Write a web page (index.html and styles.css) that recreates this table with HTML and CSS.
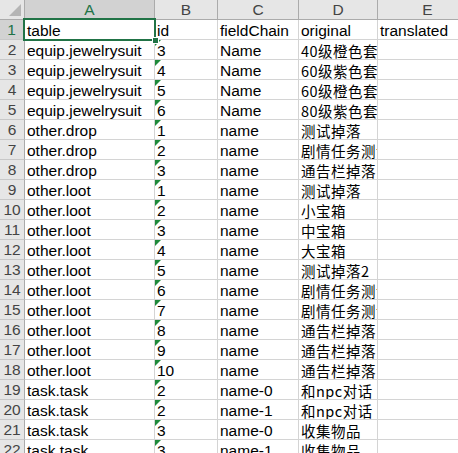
FILE: index.html
```html
<!DOCTYPE html>
<html lang="zh-CN">
<head>
<meta charset="utf-8">
<link rel="stylesheet" href="styles.css">
</head>
<body>
<div class="sheet">
  <div class="grid">
    <div class="hd corner"><span class="tri"></span></div>
    <div class="hd col sel">A</div>
    <div class="hd col">B</div>
    <div class="hd col">C</div>
    <div class="hd col">D</div>
    <div class="hd col">E</div>

    <div class="rh sel">1</div><div class="c a1">table</div><div class="c">id</div><div class="c">fieldChain</div><div class="c">original</div><div class="c">translated</div>
    <div class="rh">2</div><div class="c">equip.jewelrysuit</div><div class="c n">3</div><div class="c">Name</div><div class="c cjk">40级橙色套装</div><div class="c"></div>
    <div class="rh">3</div><div class="c">equip.jewelrysuit</div><div class="c n">4</div><div class="c">Name</div><div class="c cjk">60级紫色套装</div><div class="c"></div>
    <div class="rh">4</div><div class="c">equip.jewelrysuit</div><div class="c n">5</div><div class="c">Name</div><div class="c cjk">60级橙色套装</div><div class="c"></div>
    <div class="rh">5</div><div class="c">equip.jewelrysuit</div><div class="c n">6</div><div class="c">Name</div><div class="c cjk">80级紫色套装</div><div class="c"></div>
    <div class="rh">6</div><div class="c">other.drop</div><div class="c n">1</div><div class="c">name</div><div class="c cjk">测试掉落</div><div class="c"></div>
    <div class="rh">7</div><div class="c">other.drop</div><div class="c n">2</div><div class="c">name</div><div class="c cjk">剧情任务测试</div><div class="c"></div>
    <div class="rh">8</div><div class="c">other.drop</div><div class="c n">3</div><div class="c">name</div><div class="c cjk">通告栏掉落</div><div class="c"></div>
    <div class="rh">9</div><div class="c">other.loot</div><div class="c n">1</div><div class="c">name</div><div class="c cjk">测试掉落</div><div class="c"></div>
    <div class="rh">10</div><div class="c">other.loot</div><div class="c n">2</div><div class="c">name</div><div class="c cjk">小宝箱</div><div class="c"></div>
    <div class="rh">11</div><div class="c">other.loot</div><div class="c n">3</div><div class="c">name</div><div class="c cjk">中宝箱</div><div class="c"></div>
    <div class="rh">12</div><div class="c">other.loot</div><div class="c n">4</div><div class="c">name</div><div class="c cjk">大宝箱</div><div class="c"></div>
    <div class="rh">13</div><div class="c">other.loot</div><div class="c n">5</div><div class="c">name</div><div class="c cjk">测试掉落2</div><div class="c"></div>
    <div class="rh">14</div><div class="c">other.loot</div><div class="c n">6</div><div class="c">name</div><div class="c cjk">剧情任务测试</div><div class="c"></div>
    <div class="rh">15</div><div class="c">other.loot</div><div class="c n">7</div><div class="c">name</div><div class="c cjk">剧情任务测试</div><div class="c"></div>
    <div class="rh">16</div><div class="c">other.loot</div><div class="c n">8</div><div class="c">name</div><div class="c cjk">通告栏掉落</div><div class="c"></div>
    <div class="rh">17</div><div class="c">other.loot</div><div class="c n">9</div><div class="c">name</div><div class="c cjk">通告栏掉落</div><div class="c"></div>
    <div class="rh">18</div><div class="c">other.loot</div><div class="c n">10</div><div class="c">name</div><div class="c cjk">通告栏掉落</div><div class="c"></div>
    <div class="rh">19</div><div class="c">task.task</div><div class="c n">2</div><div class="c">name-0</div><div class="c cjk">和npc对话</div><div class="c"></div>
    <div class="rh">20</div><div class="c">task.task</div><div class="c n">2</div><div class="c">name-1</div><div class="c cjk">和npc对话</div><div class="c"></div>
    <div class="rh">21</div><div class="c">task.task</div><div class="c n">3</div><div class="c">name-0</div><div class="c cjk">收集物品</div><div class="c"></div>
    <div class="rh">22</div><div class="c">task.task</div><div class="c n">3</div><div class="c">name-1</div><div class="c cjk">收集物品</div><div class="c"></div>
  </div>
</div>
</body>
</html>
```

FILE: styles.css
```css
html, body {
  margin: 0;
  padding: 0;
  background: #ffffff;
}
.sheet {
  width: 458px;
  height: 453px;
  overflow: hidden;
}
.grid {
  display: grid;
  grid-template-columns: 25px 130px 63px 81px 79px 100px;
  grid-auto-rows: 20px;
  font-family: "Liberation Sans", Arial, sans-serif;
  font-size: 15.5px;
  color: #000;
}
.hd {
  background: #e6e6e6;
  border-right: 1px solid #ababab;
  border-bottom: 1px solid #ababab;
  box-sizing: border-box;
  color: #444;
  text-align: center;
  line-height: 20px;
  position: relative;
}
.tri {
  position: absolute;
  right: 3px;
  bottom: 3px;
  width: 0;
  height: 0;
  border-left: 12px solid transparent;
  border-bottom: 12px solid #b5b5b5;
}
.hd.sel {
  background: #d2d2d2;
  color: #217346;
  border-bottom: 2px solid #217346;
}
.rh {
  background: #e6e6e6;
  border-right: 1px solid #ababab;
  border-bottom: 1px solid #c8c8c8;
  box-sizing: border-box;
  color: #444;
  text-align: center;
  line-height: 20px;
}
.rh.sel {
  background: #d2d2d2;
  color: #217346;
  border-right: 2px solid #217346;
}
.c {
  border-right: 1px solid #d4d4d4;
  border-bottom: 1px solid #d4d4d4;
  box-sizing: border-box;
  padding: 1px 0 0 2px;
  line-height: 19px;
  white-space: nowrap;
  overflow: hidden;
  position: relative;
}
.cjk {
  font-family: "Noto Sans CJK JP", "Noto Sans CJK SC", sans-serif;
  font-size: 14.5px;
  letter-spacing: 0.5px;
  color: #000;
}
.n::before {
  content: "";
  position: absolute;
  left: 0;
  top: 0;
  width: 0;
  height: 0;
  border-top: 6px solid #1e8a3a;
  border-right: 6px solid transparent;
}
.a1 {
  overflow: visible;
}
.a1::after {
  content: "";
  position: absolute;
  left: -2px;
  top: -2px;
  right: -2px;
  bottom: -2px;
  border: 2px solid #217346;
  pointer-events: none;
}
.a1::before {
  content: "";
  position: absolute;
  right: -5px;
  bottom: -5px;
  width: 5px;
  height: 5px;
  background: #217346;
  border: 1px solid #fff;
  z-index: 2;
}
```
